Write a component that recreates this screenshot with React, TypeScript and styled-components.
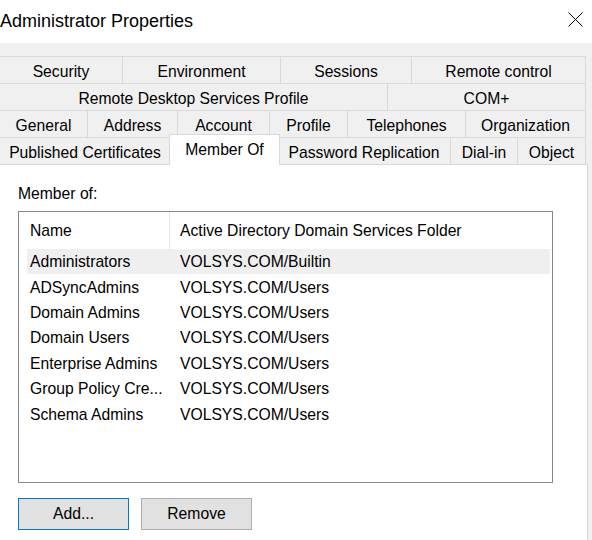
import React from "react";
import styled, { createGlobalStyle } from "styled-components";

const GlobalStyle = createGlobalStyle`
  html, body {
    margin: 0;
    padding: 0;
    background: #f0f0f0;
  }
  body {
    width: 592px;
    height: 540px;
    overflow: hidden;
    font-family: "Liberation Sans", Arial, sans-serif;
    color: #000;
  }
`;

const Window = styled.div`
  width: 592px;
  height: 540px;
  display: flex;
  flex-direction: column;
  background: #f0f0f0;
`;

const TitleBar = styled.div`
  height: 43px;
  flex: none;
  background: #fff;
  display: flex;
  align-items: center;
  justify-content: space-between;
  padding-right: 9px;
  box-sizing: border-box;
`;

const Title = styled.div`
  font-size: 18px;
  line-height: 22px;
  margin-top: -2px;
`;

const CloseButton = styled.div`
  width: 15px;
  height: 15px;
  margin-top: -4px;
  display: flex;
`;

const Body = styled.div`
  flex: 1;
  display: flex;
  flex-direction: column;
  padding-top: 13px;
`;

const TabStrip = styled.div`
  width: 586px;
  display: flex;
  flex-direction: column;
`;

const TabRow = styled.div`
  display: flex;
  height: 27px;
  box-sizing: border-box;
`;

const Tab = styled.div<{ $w: number; $selected?: boolean }>`
  box-sizing: border-box;
  flex: none;
  width: ${(p) => (p.$selected ? p.$w + 4 : p.$w)}px;
  height: ${(p) => (p.$selected ? 31 : 27)}px;
  margin: ${(p) => (p.$selected ? "-3px -2px 0 -2px" : "0")};
  position: ${(p) => (p.$selected ? "relative" : "static")};
  z-index: ${(p) => (p.$selected ? 2 : "auto")};
  background: ${(p) => (p.$selected ? "#fff" : "#f0f0f0")};
  border-top: 1px solid #d9d9d9;
  border-right: 1px solid #d9d9d9;
  border-left: ${(p) => (p.$selected ? "1px solid #d9d9d9" : "none")};
  display: flex;
  align-items: center;
  justify-content: center;
  font-size: 15.7px;
  line-height: 18px;
  padding-bottom: ${(p) => (p.$selected ? 1 : 0)}px;
  padding-top: ${(p) => (p.$selected ? 0 : 3)}px;
  white-space: nowrap;
`;

const Panel = styled.div`
  width: 588px;
  flex: 1;
  box-sizing: border-box;
  background: #fff;
  border-top: 1px solid #d9d9d9;
  border-right: 1px solid #d9d9d9;
  padding: 20px 0 0 18px;
  display: flex;
  flex-direction: column;
`;

const Label = styled.div`
  font-size: 15.7px;
  line-height: 18px;
  height: 18px;
  margin-bottom: 8px;
`;

const ListBox = styled.div`
  width: 535px;
  height: 272px;
  box-sizing: border-box;
  border: 1px solid #828790;
  display: flex;
  flex-direction: column;
  font-size: 15.7px;
`;

const HeaderRow = styled.div`
  height: 37px;
  display: flex;
  flex: none;
`;

const HeaderCell = styled.div<{ $w?: number; $divider?: boolean }>`
  box-sizing: border-box;
  width: ${(p) => (p.$w ? `${p.$w}px` : "auto")};
  flex: ${(p) => (p.$w ? "none" : "1")};
  padding-left: ${(p) => (p.$divider ? 10 : 11)}px;
  border-right: ${(p) => (p.$divider ? "none" : "1px solid #e5e5e5")};
  display: flex;
  align-items: center;
  line-height: 18px;
  white-space: nowrap;
`;

const Rows = styled.div`
  display: flex;
  flex-direction: column;
  margin: 0 2px 0 8px;
`;

const Row = styled.div<{ $hot?: boolean }>`
  height: 25.4px;
  display: flex;
  align-items: center;
  padding-top: 1px;
  box-sizing: border-box;
  background: ${(p) => (p.$hot ? "#efefef" : "transparent")};
  line-height: 18px;
`;

const Cell = styled.div<{ $w?: number }>`
  box-sizing: border-box;
  width: ${(p) => (p.$w ? `${p.$w}px` : "auto")};
  flex: ${(p) => (p.$w ? "none" : "1")};
  padding-left: ${(p) => (p.$w ? 3 : 0)}px;
  white-space: nowrap;
  overflow: hidden;
`;

const ButtonBar = styled.div`
  display: flex;
  gap: 12px;
  margin-top: 15px;
`;

const Button = styled.div<{ $default?: boolean }>`
  width: 111px;
  height: 32px;
  box-sizing: border-box;
  background: #e1e1e1;
  border: 1px solid ${(p) => (p.$default ? "#0078d7" : "#adadad")};
  display: flex;
  align-items: center;
  justify-content: center;
  font-size: 15.7px;
  line-height: 18px;
`;

type TabDef = { label: string; w: number; selected?: boolean };

const tabRows: TabDef[][] = [
  [
    { label: "Security", w: 123 },
    { label: "Environment", w: 158 },
    { label: "Sessions", w: 131 },
    { label: "Remote control", w: 174 },
  ],
  [
    { label: "Remote Desktop Services Profile", w: 388 },
    { label: "COM+", w: 198 },
  ],
  [
    { label: "General", w: 88 },
    { label: "Address", w: 90 },
    { label: "Account", w: 92 },
    { label: "Profile", w: 78 },
    { label: "Telephones", w: 118 },
    { label: "Organization", w: 120 },
  ],
  [
    { label: "Published Certificates", w: 171 },
    { label: "Member Of", w: 107, selected: true },
    { label: "Password Replication", w: 173 },
    { label: "Dial-in", w: 67 },
    { label: "Object", w: 68 },
  ],
];

const groups = [
  ["Administrators", "VOLSYS.COM/Builtin"],
  ["ADSyncAdmins", "VOLSYS.COM/Users"],
  ["Domain Admins", "VOLSYS.COM/Users"],
  ["Domain Users", "VOLSYS.COM/Users"],
  ["Enterprise Admins", "VOLSYS.COM/Users"],
  ["Group Policy Cre...", "VOLSYS.COM/Users"],
  ["Schema Admins", "VOLSYS.COM/Users"],
];

export default function App() {
  return (
    <>
      <GlobalStyle />
      <Window>
        <TitleBar>
          <Title>Administrator Properties</Title>
          <CloseButton>
            <svg width="15" height="15" viewBox="0 0 15 15">
              <path d="M0.5 0.5 L14.5 14.5 M14.5 0.5 L0.5 14.5" stroke="#000" strokeWidth="1" fill="none" />
            </svg>
          </CloseButton>
        </TitleBar>
        <Body>
          <TabStrip>
            {tabRows.map((row, i) => (
              <TabRow key={i}>
                {row.map((t) => (
                  <Tab key={t.label} $w={t.w} $selected={t.selected}>
                    {t.label}
                  </Tab>
                ))}
              </TabRow>
            ))}
          </TabStrip>
          <Panel>
            <Label>Member of:</Label>
            <ListBox>
              <HeaderRow>
                <HeaderCell $w={151}>Name</HeaderCell>
                <HeaderCell $divider>Active Directory Domain Services Folder</HeaderCell>
              </HeaderRow>
              <Rows>
                {groups.map(([name, folder], i) => (
                  <Row key={name} $hot={i === 0}>
                    <Cell $w={153}>{name}</Cell>
                    <Cell>{folder}</Cell>
                  </Row>
                ))}
              </Rows>
            </ListBox>
            <ButtonBar>
              <Button $default>Add...</Button>
              <Button>Remove</Button>
            </ButtonBar>
          </Panel>
        </Body>
      </Window>
    </>
  );
}
